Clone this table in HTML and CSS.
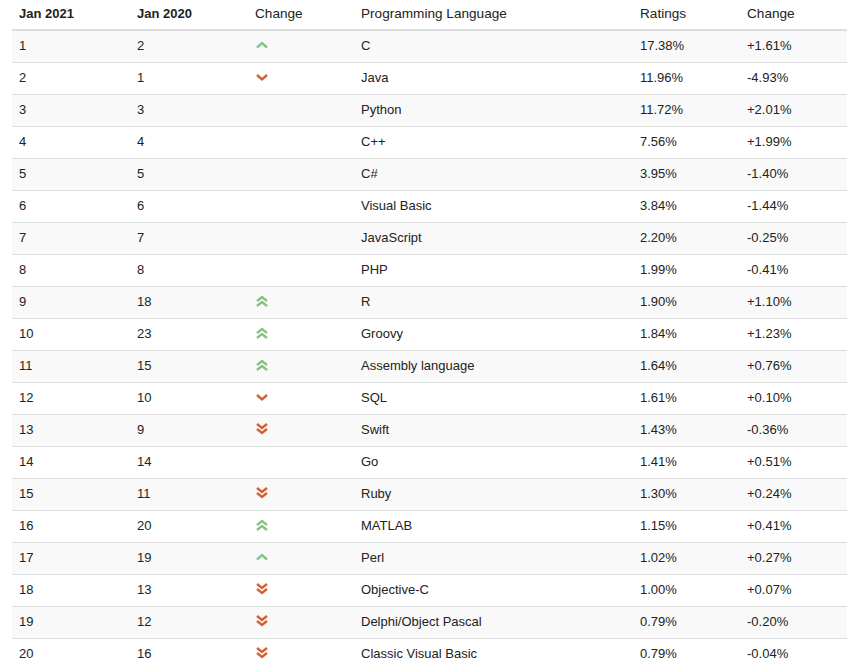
FILE: index.html
```html
<!DOCTYPE html>
<html>
<head>
<meta charset="utf-8">
<link rel="stylesheet" href="styles.css">
</head>
<body>
<table class="tbl">
<colgroup><col class="c1"><col class="c2"><col class="c3"><col class="c4"><col class="c5"><col class="c6"></colgroup>
<thead>
<tr><th class="b">Jan 2021</th><th class="b">Jan 2020</th><th>Change</th><th>Programming Language</th><th>Ratings</th><th>Change</th></tr>
</thead>
<tbody>
<tr><td>1</td><td>2</td><td><svg class="ic up" viewBox="0 0 14 14"><polyline points="2,9.5 7,5 12,9.5"/></svg></td><td>C</td><td>17.38%</td><td>+1.61%</td></tr>
<tr><td>2</td><td>1</td><td><svg class="ic dn" viewBox="0 0 14 14"><polyline points="2,5 7,9.5 12,5"/></svg></td><td>Java</td><td>11.96%</td><td>-4.93%</td></tr>
<tr><td>3</td><td>3</td><td></td><td>Python</td><td>11.72%</td><td>+2.01%</td></tr>
<tr><td>4</td><td>4</td><td></td><td>C++</td><td>7.56%</td><td>+1.99%</td></tr>
<tr><td>5</td><td>5</td><td></td><td>C#</td><td>3.95%</td><td>-1.40%</td></tr>
<tr><td>6</td><td>6</td><td></td><td>Visual Basic</td><td>3.84%</td><td>-1.44%</td></tr>
<tr><td>7</td><td>7</td><td></td><td>JavaScript</td><td>2.20%</td><td>-0.25%</td></tr>
<tr><td>8</td><td>8</td><td></td><td>PHP</td><td>1.99%</td><td>-0.41%</td></tr>
<tr><td>9</td><td>18</td><td><svg class="ic up" viewBox="0 0 14 14"><polyline points="2,7 7,3 12,7"/><polyline points="2,12 7,8 12,12"/></svg></td><td>R</td><td>1.90%</td><td>+1.10%</td></tr>
<tr><td>10</td><td>23</td><td><svg class="ic up" viewBox="0 0 14 14"><polyline points="2,7 7,3 12,7"/><polyline points="2,12 7,8 12,12"/></svg></td><td>Groovy</td><td>1.84%</td><td>+1.23%</td></tr>
<tr><td>11</td><td>15</td><td><svg class="ic up" viewBox="0 0 14 14"><polyline points="2,7 7,3 12,7"/><polyline points="2,12 7,8 12,12"/></svg></td><td>Assembly language</td><td>1.64%</td><td>+0.76%</td></tr>
<tr><td>12</td><td>10</td><td><svg class="ic dn" viewBox="0 0 14 14"><polyline points="2,5 7,9.5 12,5"/></svg></td><td>SQL</td><td>1.61%</td><td>+0.10%</td></tr>
<tr><td>13</td><td>9</td><td><svg class="ic dn" viewBox="0 0 14 14"><polyline points="2,2 7,6 12,2"/><polyline points="2,7 7,11 12,7"/></svg></td><td>Swift</td><td>1.43%</td><td>-0.36%</td></tr>
<tr><td>14</td><td>14</td><td></td><td>Go</td><td>1.41%</td><td>+0.51%</td></tr>
<tr><td>15</td><td>11</td><td><svg class="ic dn" viewBox="0 0 14 14"><polyline points="2,2 7,6 12,2"/><polyline points="2,7 7,11 12,7"/></svg></td><td>Ruby</td><td>1.30%</td><td>+0.24%</td></tr>
<tr><td>16</td><td>20</td><td><svg class="ic up" viewBox="0 0 14 14"><polyline points="2,7 7,3 12,7"/><polyline points="2,12 7,8 12,12"/></svg></td><td>MATLAB</td><td>1.15%</td><td>+0.41%</td></tr>
<tr><td>17</td><td>19</td><td><svg class="ic up" viewBox="0 0 14 14"><polyline points="2,9.5 7,5 12,9.5"/></svg></td><td>Perl</td><td>1.02%</td><td>+0.27%</td></tr>
<tr><td>18</td><td>13</td><td><svg class="ic dn" viewBox="0 0 14 14"><polyline points="2,2 7,6 12,2"/><polyline points="2,7 7,11 12,7"/></svg></td><td>Objective-C</td><td>1.00%</td><td>+0.07%</td></tr>
<tr><td>19</td><td>12</td><td><svg class="ic dn" viewBox="0 0 14 14"><polyline points="2,2 7,6 12,2"/><polyline points="2,7 7,11 12,7"/></svg></td><td>Delphi/Object Pascal</td><td>0.79%</td><td>-0.20%</td></tr>
<tr><td>20</td><td>16</td><td><svg class="ic dn" viewBox="0 0 14 14"><polyline points="2,2 7,6 12,2"/><polyline points="2,7 7,11 12,7"/></svg></td><td>Classic Visual Basic</td><td>0.79%</td><td>-0.04%</td></tr>
</tbody>
</table>
</body>
</html>
```
FILE: styles.css
```css
html, body { margin: 0; padding: 0; background: #fff; }
body { font-family: "Liberation Sans", Arial, sans-serif; color: #222; padding-left: 12px; }
.tbl { border-collapse: collapse; width: 835px; table-layout: fixed; font-size: 13px; }
.c1 { width: 118px; } .c2 { width: 118px; } .c3 { width: 106px; }
.c4 { width: 279px; } .c5 { width: 107px; } .c6 { width: 107px; }
th { text-align: left; font-weight: normal; font-size: 13.6px; height: 30px; padding: 0 7px 2px; vertical-align: middle; color: #222; border-bottom: 2px solid #ddd; box-sizing: border-box; }
th.b { font-weight: bold; font-size: 13px; }
td { height: 32px; padding: 0 7px 2px; vertical-align: middle; border-top: 1px solid #ddd; box-sizing: border-box; }
tbody tr:first-child td { border-top: 0; }
tbody tr:nth-child(odd) td { background: #f9f9f9; }
.ic { width: 14px; height: 14px; display: block; fill: none; stroke-width: 2.4; stroke-linecap: butt; stroke-linejoin: miter; }
.up { stroke: #88c088; }
.dn { stroke: #d5602f; }
```
